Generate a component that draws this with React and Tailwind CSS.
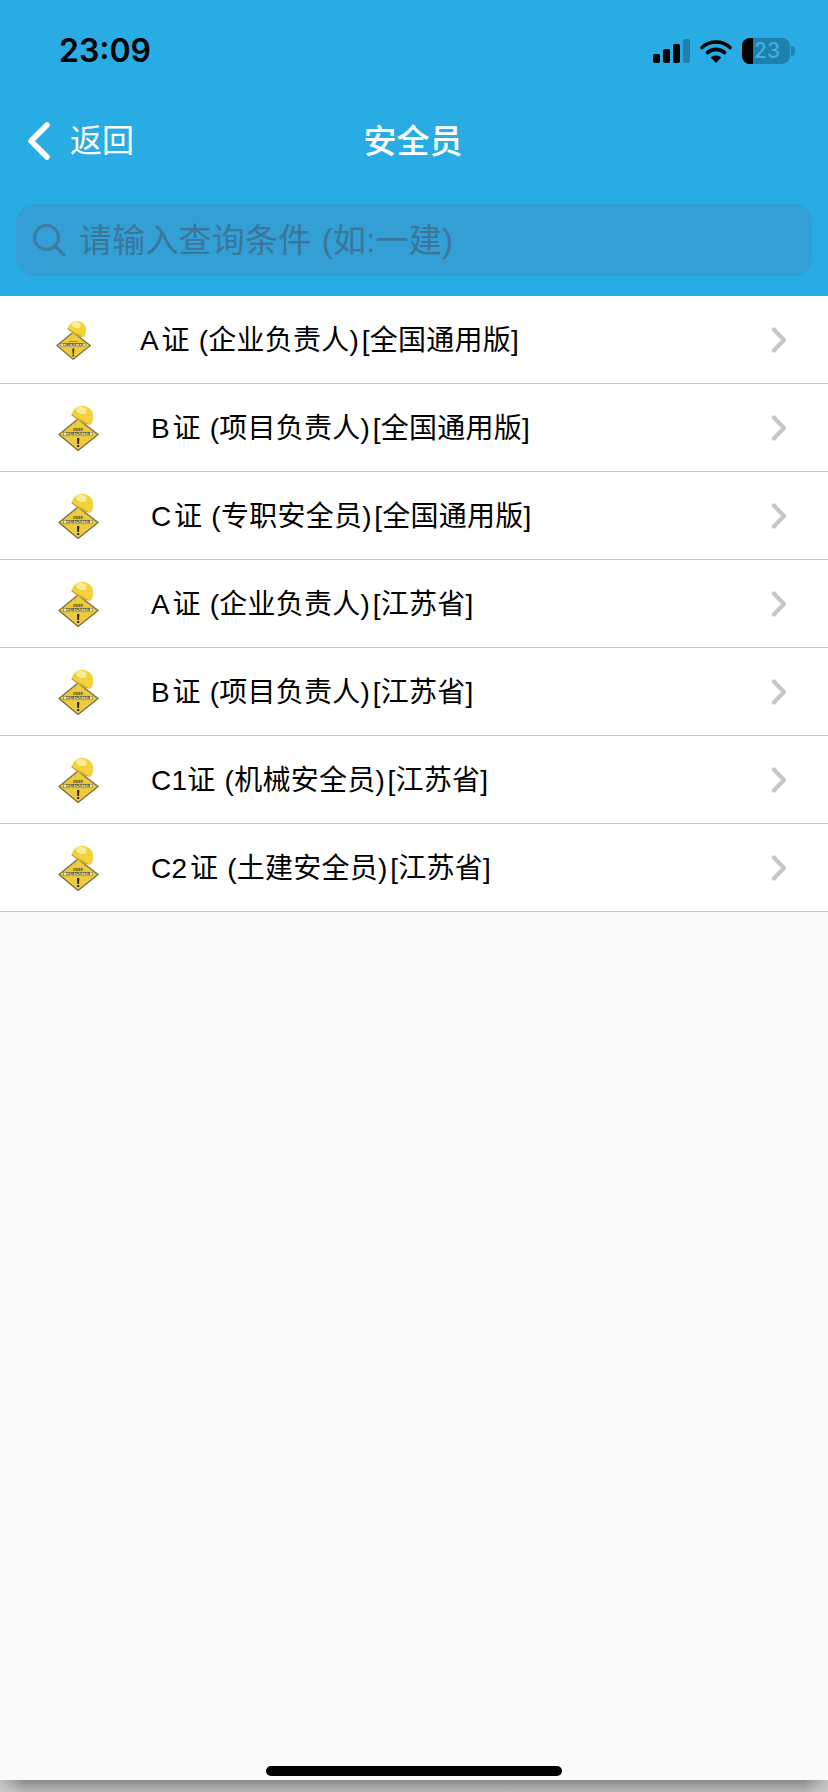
const rows = [
  { label: "A\u200A证 (企业负责人)\u200A[全国通用版]", small: true },
  { label: "B\u200A证 (项目负责人)\u200A[全国通用版]" },
  { label: "C\u200A证 (专职安全员)\u200A[全国通用版]" },
  { label: "A\u200A证 (企业负责人)\u200A[江苏省]" },
  { label: "B\u200A证 (项目负责人)\u200A[江苏省]" },
  { label: "C1证 (机械安全员)\u200A[江苏省]" },
  { label: "C2\u200A证 (土建安全员)\u200A[江苏省]" },
];

function SignalIcon() {
  return (
    <svg width="37" height="24" viewBox="0 0 37 24">
      <rect x="0" y="15" width="7" height="9" rx="2" fill="#000" />
      <rect x="10" y="10" width="7" height="14" rx="2" fill="#000" />
      <rect x="20" y="5" width="7" height="19" rx="2" fill="#000" />
      <rect x="30" y="0" width="7" height="24" rx="2" fill="#2080ad" />
    </svg>
  );
}

function WifiIcon() {
  return (
    <svg width="32" height="24" viewBox="0 0 32 24">
      <path d="M2 8.5C10 1.2 22 1.2 30 8.5" fill="none" stroke="#000" strokeWidth="3.6" strokeLinecap="round" />
      <path d="M7.5 13.5C12.5 9.3 19.5 9.3 24.5 13.5" fill="none" stroke="#000" strokeWidth="3.6" strokeLinecap="round" />
      <path d="M16 24L10.8 18.4C14 15.8 18 15.8 21.2 18.4Z" fill="#000" />
    </svg>
  );
}

function Battery() {
  return (
    <div className="flex items-center">
      <div className="flex h-[26px] w-[48px] overflow-hidden rounded-[8px] bg-[#2080ad]">
        <div className="w-[11px] bg-black" />
        <span className="ml-[1px] font-['Inter',sans-serif] text-[21px] leading-[26px] font-medium text-[#3fb0e6]">23</span>
      </div>
      <div className="ml-[1px] h-[10px] w-[4px] rounded-r-full bg-[#2080ad]" />
    </div>
  );
}

// warning diamond wearing a hard hat
function HardHatSign({ small }) {
  return (
    <svg className={small ? "h-[40px] w-[36px] blur-[0.5px]" : "h-[46px] w-[42px] blur-[0.5px]"} viewBox="0 0 42 46">
      <path d="M20 14L40 29.5L20 45.5L1 29.5Z" fill="#eccb3e" stroke="#7d6f42" strokeWidth="1.4" strokeLinejoin="round" />
      <rect x="5.5" y="27.2" width="29" height="3.6" fill="#f7e9a0" stroke="#6f6238" strokeWidth="0.5" />
      <text x="20" y="25.8" textAnchor="middle" fontSize="2.8" fontWeight="700" fill="#4a4120" fontFamily="Liberation Sans, sans-serif">UNDER</text>
      <text x="20" y="30" textAnchor="middle" fontSize="3" fontWeight="700" fill="#3b3418" fontFamily="Liberation Sans, sans-serif">CONSTRUCTION</text>
      <path d="M19 33H21.4L21 39H19.4Z" fill="#2f2a14" />
      <rect x="19.2" y="40" width="2" height="2" fill="#2f2a14" />
      <g transform="rotate(18 25 10)">
        <path d="M14 13C14 5 19 1 25 1C32 1 36 6 36 14C36 17 34 18 31 17.5C24 16.5 17 16 14 13Z" fill="#f3d23c" />
        <ellipse cx="22" cy="6" rx="5.5" ry="3.6" fill="#fbec9a" />
        <path d="M14 13C18 15.5 25 16 32 17" fill="none" stroke="#c9a61f" strokeWidth="1.2" />
      </g>
    </svg>
  );
}

function ListRow({ label, small }) {
  return (
    <div className="flex h-[88px] items-center border-b border-[#c8c8c8] bg-white">
      <div className={small ? "ml-[56px] flex w-[84px] items-center" : "ml-[58px] flex w-[93px] items-center"}>
        <HardHatSign small={small} />
      </div>
      <span className="flex-1 pt-[2px] text-[28px] leading-none tracking-[0.25px] text-black [word-spacing:1px]">{label}</span>
      <svg className="mr-[40px]" width="18" height="28" viewBox="0 0 18 28">
        <path d="M4 3.5L14 14L4 24.5" fill="none" stroke="#c8c8c8" strokeWidth="4.4" strokeLinecap="round" strokeLinejoin="round" />
      </svg>
    </div>
  );
}

export default function App() {
  return (
    <div className="flex h-[1792px] w-[828px] flex-col overflow-hidden font-['Liberation_Sans','Noto_Sans_CJK_SC',sans-serif]">
      <div className="flex h-[1780px] flex-col bg-[#fafafa]">
        <header className="bg-[#29abe3]">
          <div className="flex h-[98px] items-center justify-between pt-[3px] pr-[33px] pl-[59px]">
            <span className="font-['Inter',sans-serif] text-[32px] font-semibold text-black">23:09</span>
            <div className="flex items-center gap-[10px]">
              <SignalIcon />
              <WifiIcon />
              <Battery />
            </div>
          </div>

          <div className="grid h-[86px] grid-cols-3 items-center leading-none text-white">
            <div className="flex items-center pl-[27px]">
              <svg width="24" height="38" viewBox="0 0 24 38">
                <path d="M20 3L4 19L20 35" fill="none" stroke="#fff" strokeWidth="5.6" strokeLinecap="round" strokeLinejoin="round" />
              </svg>
              <span className="ml-[19px] text-[32px]">返回</span>
            </div>
            <div className="pr-[2px] text-center text-[33px] font-medium">安全员</div>
          </div>

          <div className="mx-[16px] mt-[20px] mb-[20px] flex h-[72px] items-center rounded-[18px] bg-[#339fd4] pl-[16px]">
            <svg width="34" height="34" viewBox="0 0 34 34">
              <circle cx="14.5" cy="14.5" r="12" fill="none" stroke="#3d7c9f" strokeWidth="3" />
              <path d="M23.5 23.5L32 32" stroke="#3d7c9f" strokeWidth="3.4" strokeLinecap="round" />
            </svg>
            <span className="ml-[13px] text-[33px] leading-none tracking-[0.2px] text-[#3a7699] [word-spacing:1px]">请输入查询条件 (如:一建)</span>
          </div>
        </header>

        <main>
          {rows.map((row) => (
            <ListRow key={row.label} label={row.label} small={row.small} />
          ))}
        </main>

        <div className="mt-auto mb-[4px] flex justify-center">
          <div className="h-[10px] w-[296px] rounded-full bg-black" />
        </div>
      </div>
      <div className="flex-1 bg-[linear-gradient(to_right,#d0d0d0cc,transparent_24px,transparent_calc(100%-24px),#d0d0d0cc),linear-gradient(#8a8a8a,#b6b6b6)]" />
    </div>
  );
}
